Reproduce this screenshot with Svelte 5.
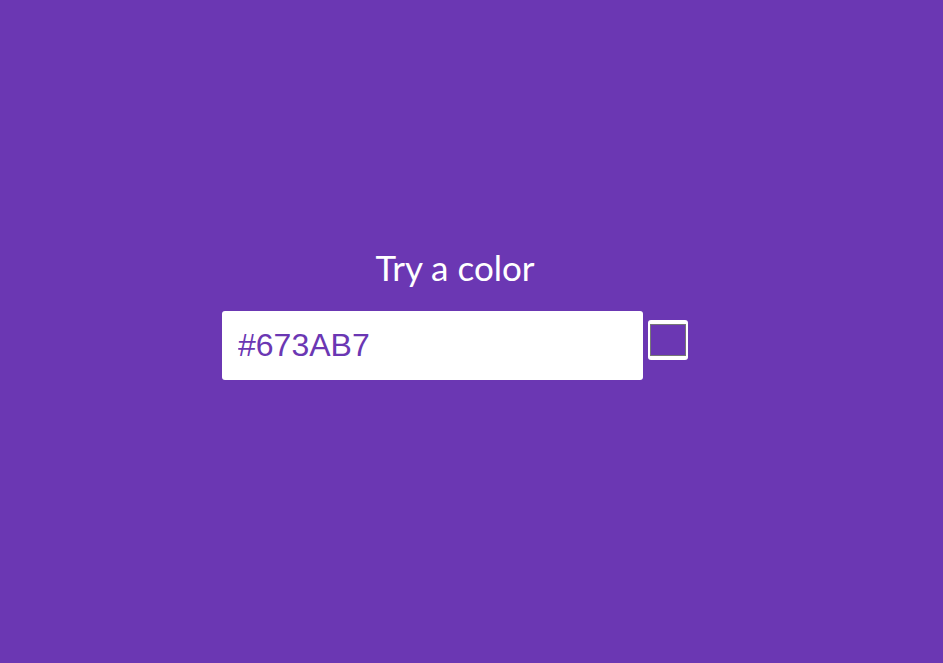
<script lang="ts">
  let color = $state('#673AB7');
  let background = $state('#6b37b3');

  function handleText() {
    if (/^#[0-9a-f]{6}$/i.test(color)) {
      background = color.toLowerCase();
    }
  }

  function handlePick() {
    color = background.toUpperCase();
  }
</script>

<main class="page" style="--color: {background}">
  <form class="picker" onsubmit={(e) => e.preventDefault()}>
    <label class="title" for="color-text">Try a color</label>
    <div class="fields">
      <input
        id="color-text"
        class="color-text"
        type="text"
        spellcheck="false"
        autocomplete="off"
        bind:value={color}
        oninput={handleText}
      />
      <input
        class="color-swatch"
        type="color"
        aria-label="Pick a color"
        bind:value={background}
        oninput={handlePick}
      />
    </div>
  </form>
</main>

<style>
  :global(body) {
    margin: 0;
  }

  .page {
    box-sizing: border-box;
    min-height: 100vh;
    padding: 0 49px 36px 16px;
    display: flex;
    align-items: center;
    justify-content: center;
    background: var(--color);
  }

  .picker {
    width: 100%;
    max-width: 466px;
    display: flex;
    flex-direction: column;
    gap: 24px;
  }

  .title {
    color: #fff;
    font-family: Lato, sans-serif;
    font-size: 35px;
    line-height: 40px;
    text-align: center;
  }

  .fields {
    display: flex;
    align-items: center;
    gap: 5px;
  }

  .color-text {
    box-sizing: border-box;
    flex: 1;
    min-width: 0;
    padding: 16px;
    border: none;
    border-radius: 3px;
    background: #fff;
    color: var(--color);
    font-family: "Liberation Sans", Arial, sans-serif;
    font-size: 32px;
    line-height: 37px;
  }

  .color-swatch {
    box-sizing: border-box;
    width: 40px;
    height: 40px;
    margin: 0 0 12px;
    padding: 0;
    border: none;
    border-radius: 3px;
    background: #fff;
    cursor: pointer;
  }

  .color-swatch::-webkit-color-swatch-wrapper {
    padding: 4px 2px;
  }

  .color-swatch::-webkit-color-swatch {
    border: 1px solid #777;
  }
</style>
